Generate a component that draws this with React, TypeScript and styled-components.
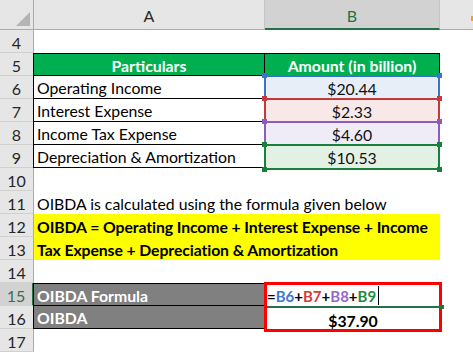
import { Fragment } from "react";
import styled, { createGlobalStyle, css } from "styled-components";

const Global = createGlobalStyle`
  html, body { margin: 0; padding: 0; background: #ffffff; }
  body { font-family: Lato, "Liberation Sans", sans-serif; }
`;

const FONT = `Lato, "Liberation Sans", sans-serif`;
const EXCEL_GREEN = "#217346";

const Sheet = styled.div`
  display: grid;
  grid-template-columns: 34px 231px 175px 1fr;
  grid-template-rows: 30px repeat(15, 23px);
  width: 473px;
  height: 353px;
  overflow: hidden;
  font-family: ${FONT};
  font-size: 15.8px;
  color: #000;
  background: #fff;
`;

const Corner = styled.div`
  position: relative;
  background: #e6e6e6;
  border-right: 1px solid #ababab;
  border-bottom: 1px solid #ababab;
  box-sizing: border-box;

  &::after {
    content: "";
    position: absolute;
    right: 3px;
    bottom: 3px;
    width: 0;
    height: 0;
    border-left: 14px solid transparent;
    border-bottom: 14px solid #b4b4b4;
  }
`;

const ColHead = styled.div<{ $active?: boolean }>`
  display: flex;
  align-items: center;
  justify-content: center;
  box-sizing: border-box;
  background: ${({ $active }) => ($active ? "#d2d2d2" : "#e6e6e6")};
  color: ${({ $active }) => ($active ? EXCEL_GREEN : "#262626")};
  border-right: 1px solid #c4c4c4;
  border-bottom: ${({ $active }) => ($active ? `2px solid ${EXCEL_GREEN}` : "1px solid #ababab")};
  padding-top: 2px;
  font-size: 16px;
`;

const RowHead = styled.div<{ $active?: boolean }>`
  display: flex;
  align-items: center;
  justify-content: center;
  box-sizing: border-box;
  background: ${({ $active }) => ($active ? "#d2d2d2" : "#e6e6e6")};
  color: ${({ $active }) => ($active ? "#3b6e4d" : "#262626")};
  border-right: ${({ $active }) => ($active ? `2px solid ${EXCEL_GREEN}` : "1px solid #ababab")};
  border-bottom: 1px solid #d0d0d0;
  padding-top: 2px;
  font-size: 16px;
`;

type CellProps = {
  $bg?: string;
  $align?: "left" | "center";
  $bold?: boolean;
  $ink?: string;
  $top?: boolean;
  $bottom?: boolean;
  $left?: boolean;
  $right?: boolean;
  $cols?: number;
  $rows?: number;
};

const Cell = styled.div<CellProps>`
  box-sizing: border-box;
  display: flex;
  align-items: center;
  justify-content: ${({ $align }) => ($align === "center" ? "center" : "flex-start")};
  padding: 1px 3px 0;
  white-space: nowrap;
  line-height: 23px;
  background: ${({ $bg }) => $bg ?? "transparent"};
  color: ${({ $ink }) => $ink ?? "#000"};
  font-weight: ${({ $bold }) => ($bold ? 700 : 400)};
  border-top: ${({ $top }) => ($top ? "1px solid #000" : "none")};
  border-bottom: ${({ $bottom }) => ($bottom ? "1px solid #000" : "none")};
  border-right: ${({ $right }) => ($right ? "1px solid #000" : "none")};
  ${({ $left }) => $left && css`box-shadow: -1px 0 0 #000;`}
  ${({ $cols }) => $cols && css`grid-column: span ${$cols};`}
  ${({ $rows }) => $rows && css`grid-row: span ${$rows};`}
`;

const Banner = styled(Cell)`
  display: block;
  white-space: nowrap;
  font-weight: 700;
  padding: 1px 3px 0;
  background: #ffff00;
  letter-spacing: -0.1px;
`;

const RefCell = styled.div<{ $tone: string; $bg: string; $last?: boolean }>`
  position: relative;
  box-sizing: border-box;
  display: flex;
  align-items: center;
  justify-content: center;
  padding-top: 1px;
  background: ${({ $bg }) => $bg};
  color: #111;
  border: 2px solid ${({ $tone }) => $tone};
  border-bottom: ${({ $last, $tone }) => ($last ? `2px solid ${$tone}` : "none")};
  margin: -1px 0 0 -1px;
  height: ${({ $last }) => ($last ? "26px" : "24px")};
`;

const Handle = styled.span<{ $tone: string; $x: "l" | "r"; $y: "t" | "b" }>`
  position: absolute;
  width: 5px;
  height: 5px;
  background: ${({ $tone }) => $tone};
  ${({ $x }) => ($x === "l" ? "left: -4px;" : "right: -4px;")}
  ${({ $y }) => ($y === "t" ? "top: -4px;" : "bottom: -4px;")}
  z-index: 2;
`;

const FormulaBox = styled.div`
  grid-row: span 2;
  display: grid;
  grid-template-rows: 23px 23px;
  box-sizing: border-box;
  border: 3px solid #ff0000;
  margin: -1px -2px -3px -1px;
  position: relative;
  z-index: 3;
  background: #fff;
`;

const FormulaLine = styled.div`
  display: flex;
  align-items: center;
  font-size: 15px;
  font-weight: 700;
  border-bottom: 2px solid ${EXCEL_GREEN};
  margin-right: -3px;
  position: relative;
`;

const Caret = styled.span`
  display: inline-block;
  width: 1px;
  height: 19px;
  background: #000;
  margin-left: 2px;
`;

const FillHandle = styled.span`
  position: absolute;
  right: -2px;
  bottom: -3px;
  width: 4px;
  height: 4px;
  background: ${EXCEL_GREEN};
`;

const Ref = styled.span<{ $ink: string }>`
  color: ${({ $ink }) => $ink};
`;

const ResultLine = styled.div`
  display: flex;
  align-items: center;
  justify-content: center;
  font-weight: 700;
  padding-top: 1px;
`;

const SideMark = styled.span`
  position: absolute;
  right: 0;
  top: 16px;
  width: 2px;
  height: 5px;
  background: #f0a030;
`;

const ColC = styled(ColHead)`
  position: relative;
  border-right: none;
`;

const refs = [
  { label: "Operating Income", value: "$20.44", tone: "#3c72c8", bg: "#e8eef8" },
  { label: "Interest Expense", value: "$2.33", tone: "#c2393e", bg: "#f8e8e8" },
  { label: "Income Tax Expense", value: "$4.60", tone: "#8a5cc0", bg: "#efebf7" },
  { label: "Depreciation & Amortization", value: "$10.53", tone: "#17803a", bg: "#e3f0e4" },
];

const Handles = ({ tone, last }: { tone: string; last?: boolean }) => (
  <>
    <Handle $tone={tone} $x="l" $y="t" />
    <Handle $tone={tone} $x="r" $y="t" />
    {last && <Handle $tone={tone} $x="l" $y="b" />}
    {last && <Handle $tone={tone} $x="r" $y="b" />}
  </>
);

export default function App() {
  return (
    <>
      <Global />
      <Sheet>
        <Corner />
        <ColHead>A</ColHead>
        <ColHead $active>B</ColHead>
        <ColC>
          <SideMark />
        </ColC>

        <RowHead>4</RowHead>
        <Cell />
        <Cell />
        <Cell />

        <RowHead>5</RowHead>
        <Cell $bg="#00b050" $ink="#fff" $bold $align="center" $top $bottom $right $left>
          Particulars
        </Cell>
        <Cell $bg="#00b050" $ink="#fff" $bold $align="center" $top $bottom $right>
          Amount (in billion)
        </Cell>
        <Cell />

        {refs.map((r, i) => {
          const last = i === refs.length - 1;
          return (
            <Fragment key={r.label}>
              <RowHead>{6 + i}</RowHead>
              <Cell $bottom $left>
                {r.label}
              </Cell>
              <RefCell $tone={r.tone} $bg={r.bg} $last={last}>
                {r.value}
                <Handles tone={r.tone} last={last} />
              </RefCell>
              <Cell />
            </Fragment>
          );
        })}

        <RowHead>10</RowHead>
        <Cell />
        <Cell />
        <Cell />

        <RowHead>11</RowHead>
        <Cell>OIBDA is calculated using the formula given below</Cell>
        <Cell />
        <Cell />

        <RowHead>12</RowHead>
        <Banner $cols={2} $rows={2}>
          OIBDA = Operating Income + Interest Expense + Income
          <br />
          Tax Expense + Depreciation &amp; Amortization
        </Banner>
        <Cell />

        <RowHead>13</RowHead>
        <Cell />

        <RowHead>14</RowHead>
        <Cell />
        <Cell />
        <Cell />

        <RowHead $active>15</RowHead>
        <Cell $bg="#808080" $ink="#fff" $bold $top $bottom $left>
          OIBDA Formula
        </Cell>
        <FormulaBox>
          <FormulaLine>
            =<Ref $ink="#3c78d8">B6</Ref>+<Ref $ink="#d23c3c">B7</Ref>+<Ref $ink="#9468cc">B8</Ref>+
            <Ref $ink="#1f8a3a">B9</Ref>
            <Caret />
            <FillHandle />
          </FormulaLine>
          <ResultLine>$37.90</ResultLine>
        </FormulaBox>
        <Cell />

        <RowHead>16</RowHead>
        <Cell $bg="#808080" $ink="#fff" $bold $bottom $left>
          OIBDA
        </Cell>
        <Cell />

        <RowHead>17</RowHead>
        <Cell />
        <Cell />
        <Cell />
      </Sheet>
    </>
  );
}
